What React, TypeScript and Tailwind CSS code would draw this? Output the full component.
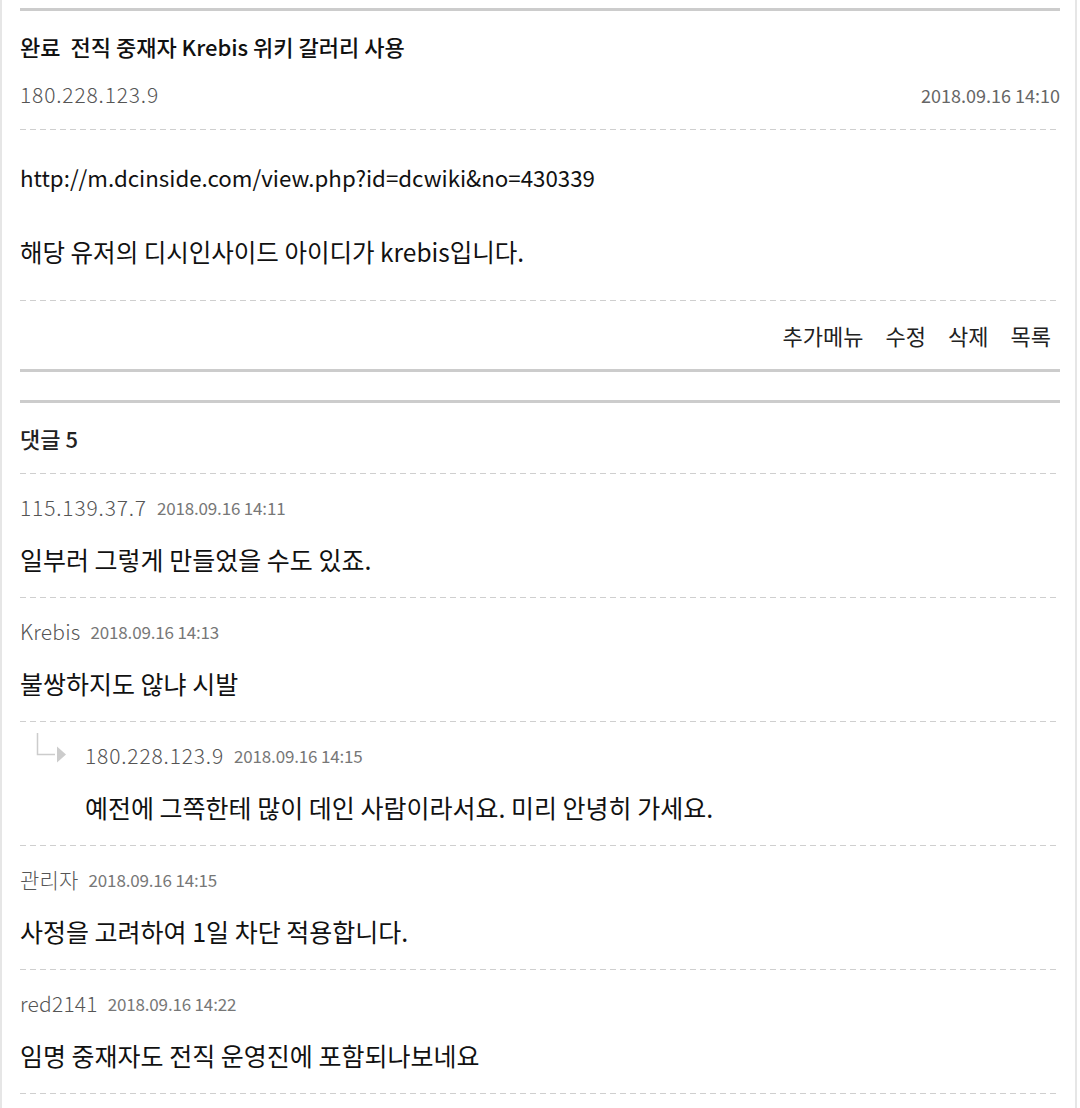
import React from "react";

const FONT = { fontFamily: '"Noto Sans CJK KR", "Noto Sans", sans-serif' };

function Dashed() {
  return (
    <div className="h-px w-full bg-[linear-gradient(to_right,#cfcfcf_6px,transparent_6px)] bg-[length:10px_1px] bg-repeat-x" />
  );
}

type C = { name: string; date: string; text: string; reply?: boolean; ip?: boolean };

const comments: C[] = [
  { name: "115.139.37.7", date: "2018.09.16 14:11", text: "일부러 그렇게 만들었을 수도 있죠.", ip: true },
  { name: "Krebis", date: "2018.09.16 14:13", text: "불쌍하지도 않냐 시발" },
  { name: "180.228.123.9", date: "2018.09.16 14:15", text: "예전에 그쪽한테 많이 데인 사람이라서요. 미리 안녕히 가세요.", reply: true, ip: true },
  { name: "관리자", date: "2018.09.16 14:15", text: "사정을 고려하여 1일 차단 적용합니다." },
  { name: "red2141", date: "2018.09.16 14:22", text: "임명 중재자도 전직 운영진에 포함되나보네요" },
];

function Comment({ c }: { c: C }) {
  return (
    <div className="relative">
      {c.reply && (
        <svg className="absolute left-[16px] top-[10px]" width="32" height="32" viewBox="0 0 32 32">
          <path d="M1.5 1 V22.5 H19" stroke="#cccccc" strokeWidth="1.5" fill="none" />
          <path d="M21 14.5 L30 22.5 L21 30.5 Z" fill="#cccccc" />
        </svg>
      )}
      <div className={`pt-[20px] pb-[20px] ${c.reply ? "pl-[65px]" : ""}`}>
        <div className="flex h-[28px] items-center">
          <span className={`text-[21px] font-light text-[#555] ${c.ip ? "tracking-[0.04em]" : "tracking-[0.01em]"}`}>{c.name}</span>
          <span className="ml-[10px] text-[17px] tracking-[-0.01em] text-[#777]">{c.date}</span>
        </div>
        <div className="mt-[19px] text-[25px] leading-[36px] text-[#111]">{c.text}</div>
      </div>
      <Dashed />
    </div>
  );
}

export default function App() {
  return (
    <div style={FONT} className="w-[1077px] min-h-[1108px] border-x-2 border-[#e6e6e6] bg-white pl-[18px] pr-[15px] pt-[8px]">
      <div className="h-[3px] bg-[#cccccc]" />
      <div className="flex h-[70px] items-center text-[22px] font-medium text-[#111]">
        <span>완료</span>
        <span className="ml-[10px]">전직 중재자 Krebis 위키 갈러리 사용</span>
      </div>
      <div className="flex h-[28px] items-center justify-between pb-0">
        <span className="text-[21px] font-light tracking-[0.04em] text-[#555]">180.228.123.9</span>
        <span className="text-[18px] text-[#666]">2018.09.16 14:10</span>
      </div>
      <div className="h-[20px]" />
      <Dashed />
      <div className="pt-[29px] pb-[30px] leading-[37px] text-[#111]">
        <div className="text-[22.3px]">http://m.dcinside.com/view.php?id=dcwiki&amp;no=430339</div>
        <div className="h-[37px]" />
        <div className="text-[24.5px]">해당 유저의 디시인사이드 아이디가 krebis입니다.</div>
      </div>
      <Dashed />
      <div className="flex h-[68px] items-center justify-end gap-[22px] pr-[9px] text-[22px] text-[#222]">
        <span>추가메뉴</span>
        <span>수정</span>
        <span>삭제</span>
        <span>목록</span>
      </div>
      <div className="h-[3px] bg-[#cccccc]" />
      <div className="h-[28px]" />
      <div className="h-[3px] bg-[#cccccc]" />
      <div className="flex h-[70px] items-center text-[22px] font-medium text-[#222]">댓글 5</div>
      <Dashed />
      {comments.map((c, i) => (
        <Comment key={i} c={c} />
      ))}
    </div>
  );
}
